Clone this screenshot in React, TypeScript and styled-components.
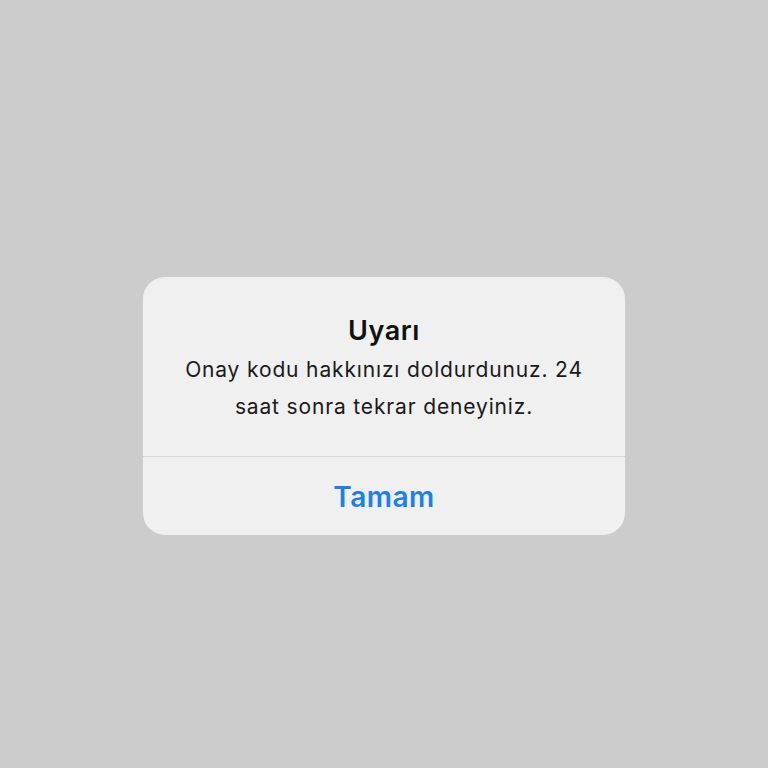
import React from "react";
import styled, { createGlobalStyle } from "styled-components";

const Global = createGlobalStyle`
  html, body { margin: 0; padding: 0; background: #cccccc; }
  body { font-family: Inter, "Noto Sans", sans-serif; }
`;

const Page = styled.div`
  width: 768px;
  height: 768px;
  background: #cccccc;
  display: flex;
  justify-content: center;
  align-items: flex-start;
  padding-top: 277px;
  box-sizing: border-box;
`;

const Card = styled.div`
  width: 482px;
  height: 258px;
  background: #f0f0f0;
  border-radius: 22px;
  display: flex;
  flex-direction: column;
  overflow: hidden;
`;

const Body = styled.div`
  height: 180px;
  box-sizing: border-box;
  padding-top: 36px;
  display: flex;
  flex-direction: column;
  align-items: center;
  text-align: center;
  border-bottom: 1.5px solid #d8d8d8;
`;

const Title = styled.div`
  font-size: 27px;
  font-weight: 600;
  color: #111;
  line-height: 35px;
  letter-spacing: 0.6px;
`;

const Message = styled.div`
  font-size: 21px;
  line-height: 37px;
  color: #1a1a1a;
  margin-top: 3px;
  width: 440px;
  letter-spacing: 0.85px;
`;

const Button = styled.button`
  flex: 1;
  border: none;
  background: transparent;
  font-family: Inter, "Noto Sans", sans-serif;
  font-size: 28px;
  font-weight: 600;
  color: #1b7ff2;
  letter-spacing: 0.5px;
  padding: 0;
  padding-top: 1px;
  cursor: pointer;
`;

export default function App() {
  return (
    <>
      <Global />
      <Page>
        <Card>
          <Body>
            <Title>Uyarı</Title>
            <Message>
              Onay kodu hakkınızı doldurdunuz. 24 saat sonra tekrar deneyiniz.
            </Message>
          </Body>
          <Button>Tamam</Button>
        </Card>
      </Page>
    </>
  );
}
